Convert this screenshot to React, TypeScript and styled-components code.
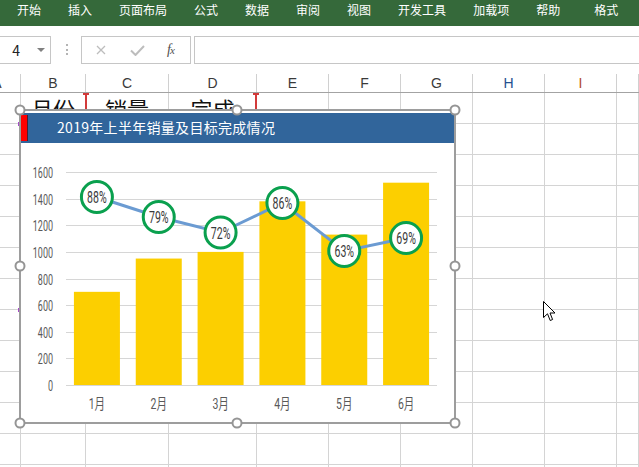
import React from 'react';
import styled, { createGlobalStyle } from 'styled-components';

const GlobalStyle = createGlobalStyle`
  html, body { margin: 0; padding: 0; background: #fff; }
  body { font-family: "Noto Sans CJK SC", "Liberation Sans", sans-serif; overflow: hidden; }
  * { box-sizing: border-box; }
`;

const Page = styled.div`
  position: relative;
  width: 639px;
  height: 467px;
  overflow: hidden;
  background: #fff;
`;

const Ribbon = styled.div`
  display: flex;
  align-items: flex-start;
  gap: 27px;
  height: 26px;
  padding-left: 17px;
  background: #35693a;
`;

const Tab = styled.span<{ $extra?: number }>`
  color: #fff;
  font-family: "Noto Sans CJK SC", sans-serif;
  font-size: 12px;
  line-height: 20px;
  white-space: nowrap;
  margin-left: ${(p) => p.$extra ?? 0}px;
`;

const FormulaBar = styled.div`
  display: flex;
  align-items: flex-start;
  height: 47px;
  padding-top: 10px;
`;

const NameBox = styled.div`
  display: flex;
  align-items: center;
  justify-content: space-between;
  margin-left: -40px;
  width: 91px;
  height: 28px;
  border: 1px solid #c6c6c6;
  padding: 0 5px 0 9px;
`;

const NameText = styled.span`
  font-family: "Noto Sans CJK SC", "Liberation Sans", sans-serif;
  font-size: 14px;
  color: #222;
  white-space: pre;
  word-spacing: 11px;
`;

const DropArrow = styled.span`
  width: 0;
  height: 0;
  border-left: 4px solid transparent;
  border-right: 4px solid transparent;
  border-top: 4px solid #808080;
`;

const Dots = styled.span`
  margin: 8px 0 0 15px;
  height: 11px;
  border-left: 2px dotted #b4b4b4;
`;

const FxBox = styled.div`
  display: flex;
  align-items: center;
  margin-left: 13px;
  width: 110px;
  height: 28px;
  border: 1px solid #c6c6c6;
`;

const FxIcon = styled.svg<{ $ml: number }>`
  margin-left: ${(p) => p.$ml}px;
  flex: none;
`;

const FxLabel = styled.span`
  margin-left: 22px;
  font-family: "Liberation Serif", serif;
  font-style: italic;
  font-size: 14px;
  color: #505050;
  letter-spacing: -1px;
`;

const FxSub = styled.span`
  font-size: 11px;
`;

const FormulaInput = styled.div`
  flex: 1;
  margin-left: 3px;
  height: 28px;
  border: 1px solid #c6c6c6;
  border-right: none;
`;

const Sheet = styled.div`
  position: relative;
`;

const COLS = '21px 65px 83px 88px 72px 72px 72px 72px 72px 1fr';

const HeaderRow = styled.div`
  display: grid;
  grid-template-columns: ${COLS};
  height: 20px;
  border-bottom: 1px solid #a3a3a3;
`;

const HeaderCell = styled.div<{ $color?: string }>`
  display: flex;
  align-items: flex-end;
  justify-content: center;
  border-right: 1px solid #d0d0d0;
  margin-top: 1px;
  font-family: "Liberation Sans", sans-serif;
  font-size: 14px;
  line-height: 17px;
  color: ${(p) => p.$color ?? '#3a3a3a'};
  overflow: hidden;
`;

const PartialLabel = styled.span`
  margin-left: -26px;
`;

const BodyRow = styled.div`
  display: grid;
  grid-template-columns: ${COLS};
  height: 31px;
`;

const Cell = styled.div`
  border-right: 1px solid #d4d4d4;
  border-bottom: 1px solid #d4d4d4;
  overflow: hidden;
  text-align: center;
  font-family: "Noto Sans CJK SC", sans-serif;
  font-size: 22px;
  line-height: 30px;
  color: #111;
  white-space: nowrap;
`;

const RedMark = styled.div<{ $x: number }>`
  position: absolute;
  left: ${(p) => p.$x}px;
  top: 20px;
  width: 2px;
  height: 16px;
  background: #d23a3a;
  &::before {
    content: '';
    position: absolute;
    left: -2px;
    top: 0;
    width: 6px;
    height: 2px;
    background: #d23a3a;
  }
`;

const PurpleTick = styled.div<{ $y: number }>`
  position: absolute;
  left: 18px;
  top: ${(p) => p.$y}px;
  width: 1px;
  height: 4px;
  background: #a64cc8;
`;

const ChartFrame = styled.div`
  position: absolute;
  left: 19px;
  top: 36px;
  width: 437px;
  height: 315px;
  border: 2px solid #9d9d9d;
  background: #fff;
  padding-top: 2px;
  display: flex;
  flex-direction: column;
`;

const TitleBar = styled.div`
  display: flex;
  align-items: flex-start;
  height: 30px;
  background: #31659b;
  flex: none;
`;

const TitleFlag = styled.div`
  margin-top: 2px;
  width: 7px;
  height: 26px;
  background: #f00;
  border-right: 1px solid #4a2030;
`;

const TitleText = styled.span`
  margin-left: 29px;
  font-family: "Noto Sans CJK SC", sans-serif;
  font-size: 14px;
  letter-spacing: 0.3px;
  line-height: 29px;
  color: #fff;
  white-space: nowrap;
`;

const Plot = styled.svg`
  display: block;
  flex: none;
`;

const AxisText = styled.text`
  font-family: Roboto, "Noto Sans CJK SC", sans-serif;
  font-size: 15px;
  fill: #595959;
`;

const PctText = styled.text`
  font-family: Roboto, "Noto Sans CJK SC", sans-serif;
  font-size: 16px;
  fill: #3a3a3a;
`;

const Handle = styled.div<{ $x: number; $y: number }>`
  position: absolute;
  left: calc(${(p) => p.$x * 100}% + ${(p) => (p.$x === 0 ? -1 : p.$x === 1 ? 0.5 : -0.5)}px);
  top: calc(${(p) => p.$y * 100}% + ${(p) => (p.$y === 0 ? -1 : p.$y === 1 ? 0.5 : -0.5)}px);
  width: 11px;
  height: 11px;
  transform: translate(-50%, -50%);
  border-radius: 50%;
  border: 2px solid #959595;
  background: #fff;
`;

const HandleLayer = styled.div`
  position: absolute;
  left: 0;
  top: 0;
  right: 0;
  bottom: 0;
  pointer-events: none;
`;

const Cursor = styled.svg`
  position: absolute;
  left: 543px;
  top: 228px;
`;

const tabs: { t: string; extra?: number }[] = [
  { t: '开始' },
  { t: '插入' },
  { t: '页面布局' },
  { t: '公式' },
  { t: '数据' },
  { t: '审阅' },
  { t: '视图' },
  { t: '开发工具' },
  { t: '加载项' },
  { t: '帮助' },
  { t: '格式', extra: 7 },
];

const headers: { l: string; color?: string }[] = [
  { l: 'A' },
  { l: 'B' },
  { l: 'C' },
  { l: 'D' },
  { l: 'E' },
  { l: 'F' },
  { l: 'G' },
  { l: 'H', color: '#24508f' },
  { l: 'I', color: '#b24d2a' },
  { l: '' },
];

const values = [700, 950, 1000, 1380, 1130, 1520];
const pcts = ['88%', '79%', '72%', '86%', '63%', '69%'];
const lineY = [54, 74, 89.5, 60, 108, 95];
const months = ['1月', '2月', '3月', '4月', '5月', '6月'];
const BASE = 242;
const K = 0.1331;
const X0 = 45;
const X1 = 416;
const STEP = (X1 - X0) / 6;
const cx = (i: number) => X0 + STEP * (i + 0.5);

function Chart() {
  const grid = Array.from({ length: 9 }, (_, i) => ({ v: i * 200, y: Math.round(BASE - i * 26.625) }));
  const pts = lineY.map((y, i) => `${cx(i)},${y}`).join(' ');
  return (
    <ChartFrame>
      <TitleBar>
        <TitleFlag />
        <TitleText>2019年上半年销量及目标完成情况</TitleText>
      </TitleBar>
      <Plot width={433} height={279} viewBox="0 0 433 279">
        {grid.map((g) => (
          <line key={g.v} x1={X0} x2={X1} y1={g.y + 0.5} y2={g.y + 0.5} stroke="#d6d6d6" strokeWidth={1} />
        ))}
        {grid.map((g) => (
          <AxisText key={'l' + g.v} transform={`translate(32 ${g.y + 6}) scale(0.6 1)`} textAnchor="end">
            {g.v}
          </AxisText>
        ))}
        {values.map((v, i) => (
          <rect key={i} x={cx(i) - 23} y={BASE - v * K} width={46} height={v * K} fill="#fccf00" />
        ))}
        <polyline points={pts} fill="none" stroke="#6b9bd2" strokeWidth={3} />
        {pcts.map((p, i) => (
          <g key={p + i}>
            <circle cx={cx(i)} cy={lineY[i]} r={15.5} fill="#fff" stroke="#0aa04e" strokeWidth={3} />
            <PctText transform={`translate(${cx(i)} ${lineY[i] + 6}) scale(0.66 1)`} textAnchor="middle">
              {p}
            </PctText>
          </g>
        ))}
        {months.map((m, i) => (
          <AxisText key={m} transform={`translate(${cx(i)} ${266}) scale(0.7 1)`} textAnchor="middle">
            {m}
          </AxisText>
        ))}
      </Plot>
      <HandleLayer>
        {[0, 0.5, 1].map((x) =>
          [0, 0.5, 1].map((y) => (x === 0.5 && y === 0.5 ? null : <Handle key={`${x}-${y}`} $x={x} $y={y} />))
        )}
      </HandleLayer>
    </ChartFrame>
  );
}

export default function App() {
  const rows = Array.from({ length: 13 }, (_, r) => r);
  return (
    <Page>
      <GlobalStyle />
      <Ribbon>
        {tabs.map((t) => (
          <Tab key={t.t} $extra={t.extra}>
            {t.t}
          </Tab>
        ))}
      </Ribbon>
      <FormulaBar>
        <NameBox>
          <NameText>图表 4</NameText>
          <DropArrow />
        </NameBox>
        <Dots />
        <FxBox>
          <FxIcon $ml={14} width={10} height={10} viewBox="0 0 10 10">
            <path d="M1 1 L9 9 M9 1 L1 9" stroke="#bdbdbd" strokeWidth={1.3} fill="none" />
          </FxIcon>
          <FxIcon $ml={24} width={15} height={11} viewBox="0 0 15 11">
            <path d="M1 5.5 L5.5 10 L14 1" stroke="#bdbdbd" strokeWidth={2} fill="none" />
          </FxIcon>
          <FxLabel>
            f<FxSub>x</FxSub>
          </FxLabel>
        </FxBox>
        <FormulaInput />
      </FormulaBar>
      <Sheet>
        <HeaderRow>
          {headers.map((h, i) => (
            <HeaderCell key={i} $color={h.color}>
              {i === 0 ? <PartialLabel>{h.l}</PartialLabel> : h.l}
            </HeaderCell>
          ))}
        </HeaderRow>
        {rows.map((r) => (
          <BodyRow key={r}>
            {headers.map((_, c) => (
              <Cell key={c}>
                {r === 0 && c === 1 ? '月份' : r === 0 && c === 2 ? '销量' : r === 0 && c === 3 ? '完成' : ''}
              </Cell>
            ))}
          </BodyRow>
        ))}
        <RedMark $x={85} />
        <RedMark $x={255} />
        <PurpleTick $y={49} />
        <PurpleTick $y={235} />
        <Chart />
        <Cursor width={13} height={21} viewBox="0 0 13 21">
          <path
            d="M0.5 0.5 L0.5 16.5 L4.5 12.8 L7.2 19.5 L9.6 18.5 L7 12 L12 12 Z"
            fill="#fff"
            stroke="#000"
            strokeWidth={1}
            strokeLinejoin="miter"
          />
        </Cursor>
      </Sheet>
    </Page>
  );
}
